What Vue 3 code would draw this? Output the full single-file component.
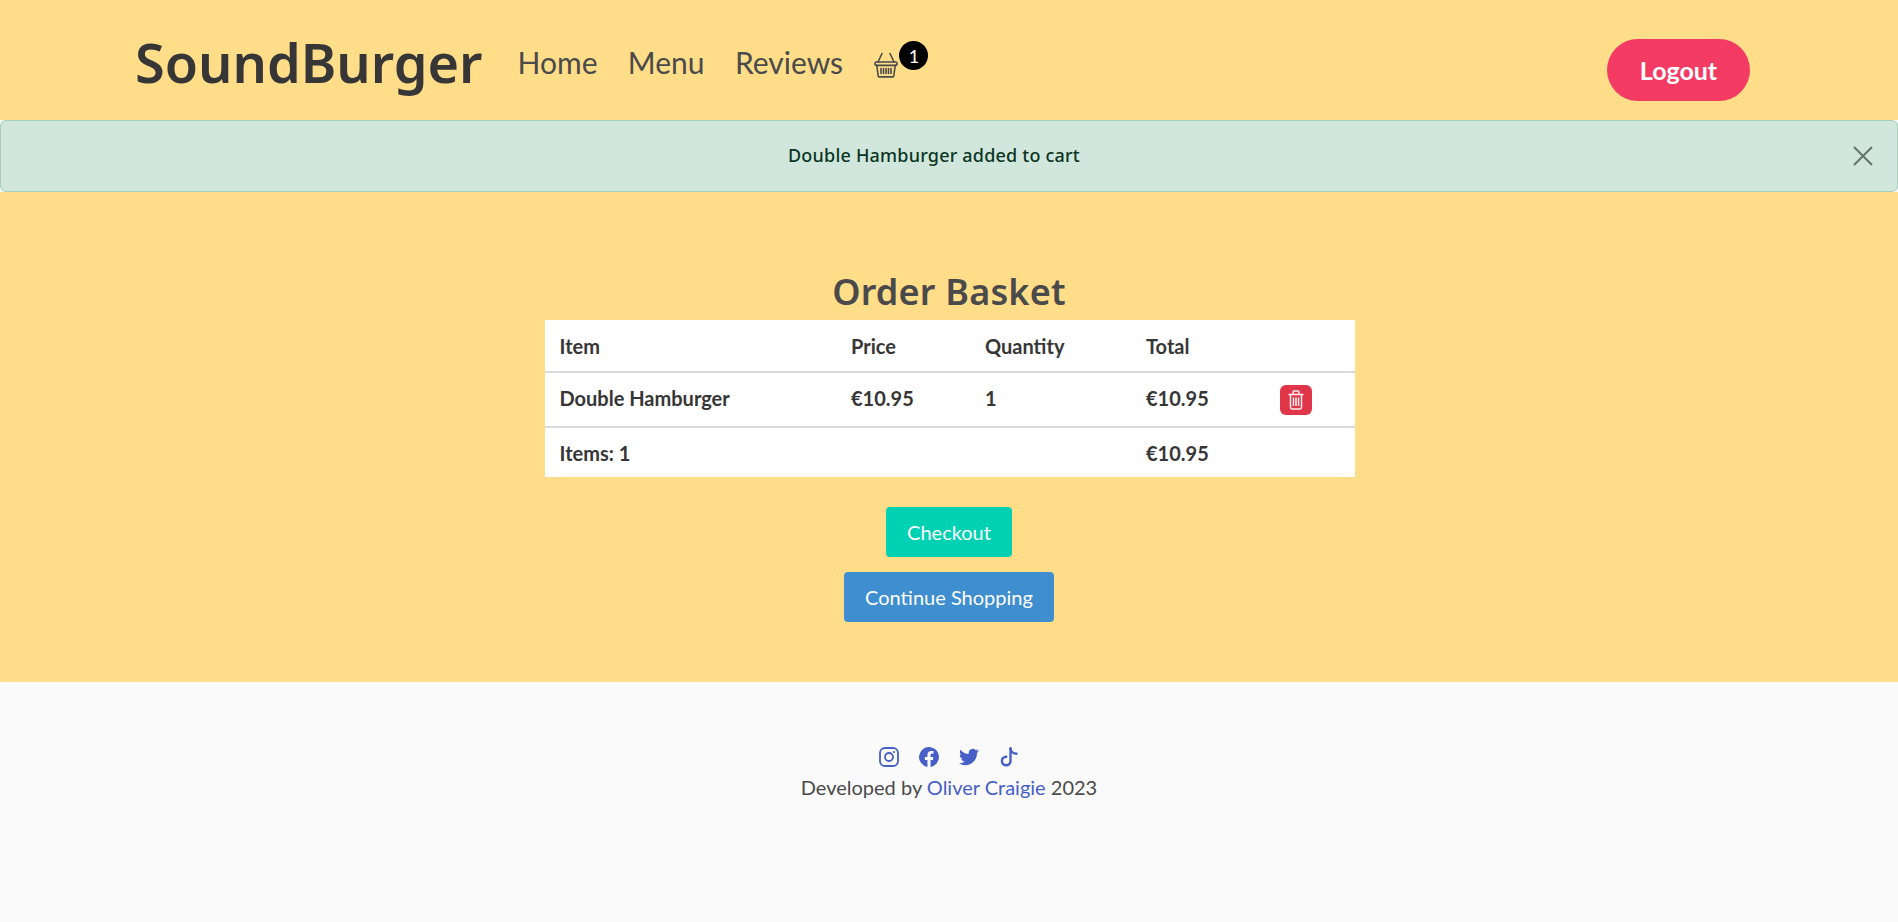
<template>
  <div class="page">
    <nav class="navbar">
      <div class="navbar-start">
        <a class="logo" href="#">SoundBurger</a>
        <a class="nav-link" href="#">Home</a>
        <a class="nav-link" href="#">Menu</a>
        <a class="nav-link" href="#">Reviews</a>
        <a class="cart" href="#" aria-label="Basket">
          <svg class="cart-icon" viewBox="0 0 24 26" fill="none" stroke="#4a4a4a" stroke-width="1.6" stroke-linejoin="round" stroke-linecap="round">
            <path d="M8 1.500 4 10M16 1.500 20 10" />
            <rect x="1" y="10" width="22" height="3.400" rx="1.200" />
            <path d="M2.800 13.400 4.200 24a1 1 0 0 0 1 .9h13.600a1 1 0 0 0 1-.9l1.400-10.600" />
            <path d="M7 16.500v5M9.500 16.500v5M12 16.500v5M14.500 16.500v5M17 16.500v5" />
          </svg>
          <span class="cart-count">1</span>
        </a>
      </div>
      <button class="logout">Logout</button>
    </nav>

    <div v-if="showMessage" class="message">
      <span>Double Hamburger added to cart</span>
      <button class="message-close" aria-label="Close" @click="showMessage = false">
        <svg viewBox="0 0 20 20" width="20" height="20" stroke="#66736d" stroke-width="2" fill="none">
          <path d="M1 1 19 19M19 1 1 19" />
        </svg>
      </button>
    </div>

    <main class="basket">
      <h1 class="basket-title">Order Basket</h1>
      <table class="basket-table">
        <thead>
          <tr>
            <th class="col-item">Item</th>
            <th class="col-price">Price</th>
            <th class="col-qty">Quantity</th>
            <th class="col-total">Total</th>
            <th></th>
          </tr>
        </thead>
        <tbody>
          <tr v-for="line in lines" :key="line.name">
            <td>{{ line.name }}</td>
            <td>€{{ line.price }}</td>
            <td>{{ line.qty }}</td>
            <td>€{{ line.price }}</td>
            <td>
              <button class="delete-btn" aria-label="Remove">
                <svg viewBox="0 0 16 20" width="16" height="20" fill="none" stroke="#fff" stroke-opacity="0.9" stroke-width="1.500">
                  <path d="M.5 4.500h15M5 4.500V2a1 1 0 0 1 1-1h4a1 1 0 0 1 1 1v2.500" />
                  <path d="M2.500 4.500v12.800a1.700 1.700 0 0 0 1.700 1.700h7.600a1.700 1.700 0 0 0 1.700-1.700V4.500" />
                  <path d="M5.500 7.500v8.500M8 7.500v8.500M10.500 7.500v8.500" />
                </svg>
              </button>
            </td>
          </tr>
        </tbody>
        <tfoot>
          <tr>
            <td>Items: 1</td>
            <td></td>
            <td></td>
            <td>€10.95</td>
            <td></td>
          </tr>
        </tfoot>
      </table>
      <button class="action checkout">Checkout</button>
      <button class="action continue">Continue Shopping</button>
    </main>

    <footer class="footer">
      <div class="socials">
        <a href="#" aria-label="Instagram">
          <svg viewBox="0 0 20 20" width="20" height="20" fill="none" stroke="#485fc7" stroke-width="1.800">
            <rect x="1" y="1" width="18" height="18" rx="5" />
            <circle cx="10" cy="10" r="4" />
            <circle cx="15" cy="5" r="1.100" fill="#485fc7" stroke="none" />
          </svg>
        </a>
        <a href="#" aria-label="Facebook">
          <svg viewBox="0 0 20 20" width="20" height="20" fill="#485fc7">
            <path d="M20 10a10 10 0 1 0-11.560 9.880v-6.990H5.900V10h2.540V7.800c0-2.510 1.490-3.890 3.780-3.890 1.090 0 2.240.19 2.240.19v2.460h-1.260c-1.240 0-1.630.77-1.630 1.560V10h2.780l-.44 2.890h-2.340v6.990A10 10 0 0 0 20 10z" />
          </svg>
        </a>
        <a href="#" aria-label="Twitter">
          <svg viewBox="0 0 24 24" width="20" height="20" fill="#485fc7">
            <path d="M23.950 4.570a10 10 0 0 1-2.820.78 4.960 4.960 0 0 0 2.160-2.720c-.95.550-2 .96-3.130 1.190a4.920 4.920 0 0 0-8.380 4.480C7.690 8.090 4.070 6.130 1.640 3.160a4.820 4.820 0 0 0-.66 2.470c0 1.710.87 3.210 2.190 4.100a4.900 4.900 0 0 1-2.230-.62v.06a4.920 4.920 0 0 0 3.950 4.830c-.72.190-1.480.22-2.220.08a4.940 4.940 0 0 0 4.600 3.420A9.870 9.870 0 0 1 0 19.540a14 14 0 0 0 7.560 2.210c9.050 0 14-7.500 14-13.990 0-.21 0-.42-.02-.63A9.940 9.940 0 0 0 24 4.590z" />
          </svg>
        </a>
        <a href="#" aria-label="TikTok">
          <svg viewBox="0 0 20 20" width="20" height="20" fill="none" stroke="#485fc7" stroke-width="2.400" stroke-linecap="round">
            <path d="M11.500 1.500v12.500a4.300 4.300 0 1 1-4.300-4.300" />
            <path d="M11.500 1.500c.3 3 2.700 5 6 5.200" />
          </svg>
        </a>
      </div>
      <p class="credit">Developed by <a href="#">Oliver Craigie</a> 2023</p>
    </footer>
  </div>
</template>

<script setup>
import { ref } from "vue";

const showMessage = ref(true);
const lines = [{ name: "Double Hamburger", price: "10.95", qty: 1 }];
</script>

<style>
html,
body {
  margin: 0;
  background: #fafafa;
}
</style>

<style scoped>
.page {
  min-height: 922px;
  display: flex;
  flex-direction: column;
  font-family: Lato, "Liberation Sans", sans-serif;
  font-size: 20px;
  color: #4a4a4a;
  background: #fafafa;
}
a {
  text-decoration: none;
}
button {
  font-family: inherit;
  cursor: pointer;
}
.navbar {
  height: 120px;
  box-sizing: border-box;
  padding: 0 148px 0 135px;
  display: flex;
  justify-content: space-between;
  align-items: center;
  background: #ffdd89;
}
.navbar-start {
  display: flex;
  align-items: center;
  margin-top: 4px;
}
.logo {
  font-family: "Noto Sans", sans-serif;
  font-size: 54px;
  font-weight: 600;
  color: #363636;
  margin-right: 35px;
}
.nav-link {
  font-size: 30px;
  color: #4a4a4a;
  margin-right: 30.4px;
}
.cart {
  position: relative;
  display: flex;
  align-items: center;
  margin: 6px 0 0 1px;
}
.cart-icon {
  width: 24px;
  height: 26px;
}
.cart-count {
  position: absolute;
  top: -11px;
  left: 25px;
  width: 29px;
  height: 29px;
  border-radius: 50%;
  background: #000;
  color: #fff;
  font-size: 18px;
  display: flex;
  align-items: center;
  justify-content: center;
}
.logout {
  width: 143px;
  height: 62px;
  margin-top: 20px;
  border: none;
  border-radius: 31px;
  background: #f43b63;
  color: #fff;
  font-size: 25px;
  font-weight: 700;
}
.message {
  height: 72px;
  box-sizing: border-box;
  padding: 0 30px 2px 0;
  border: 1px solid #a3cfbb;
  border-radius: 6px;
  background: #d1e7dd;
  color: #0a3622;
  font-family: "Noto Sans", sans-serif;
  font-size: 18px;
  font-weight: 500;
  letter-spacing: 0.2px;
  display: flex;
  align-items: center;
  justify-content: center;
  position: relative;
}
.message-close {
  position: absolute;
  right: 24px;
  top: 25px;
  padding: 0;
  border: none;
  background: none;
  line-height: 0;
}
.basket {
  height: 490px;
  box-sizing: border-box;
  padding-top: 72px;
  display: flex;
  flex-direction: column;
  align-items: center;
  background: #ffdd89;
}
.basket-title {
  margin: 0;
  height: 56px;
  line-height: 56px;
  font-family: "Noto Sans", sans-serif;
  font-size: 36px;
  font-weight: 600;
  letter-spacing: 0.2px;
  color: #4a4a4a;
}
.basket-table {
  width: 810px;
  margin: 0 0 30px 2px;
  border-collapse: collapse;
  table-layout: fixed;
  background: #fff;
  color: #363636;
  font-size: 20px;
  font-weight: 700;
}
.basket-table th,
.basket-table td {
  padding: 0 15px;
  text-align: left;
  vertical-align: middle;
}
.basket-table th:first-child,
.basket-table td:first-child {
  padding-left: 14.5px;
}
.basket-table tbody td:not(:last-child) {
  padding-bottom: 4px;
}
.basket-table thead tr {
  height: 52px;
  border-bottom: 2px solid #dbdbdb;
}
.basket-table tbody tr {
  height: 55px;
  border-bottom: 2px solid #dbdbdb;
}
.basket-table tfoot tr {
  height: 50px;
}
.col-item {
  width: 261.5px;
}
.col-price {
  width: 104px;
}
.col-qty {
  width: 131px;
}
.col-total {
  width: 104px;
}
.delete-btn {
  width: 32px;
  height: 30px;
  padding: 0;
  border: none;
  border-radius: 6px;
  background: #e03649;
  display: flex;
  align-items: center;
  justify-content: center;
}
.action {
  height: 50px;
  padding: 0 21px;
  border: none;
  border-radius: 4px;
  color: #fff;
  font-size: 20px;
}
.checkout {
  background: #00d1b2;
  margin-bottom: 15px;
}
.continue {
  background: #3e8ed0;
}
.footer {
  flex: 1;
  padding-top: 65px;
  text-align: center;
}
.socials {
  display: flex;
  justify-content: center;
  gap: 20px;
  line-height: 0;
}
.credit {
  margin: 8px 0 0;
  font-size: 20px;
  line-height: 24px;
}
.credit a {
  color: #485fc7;
}
</style>
